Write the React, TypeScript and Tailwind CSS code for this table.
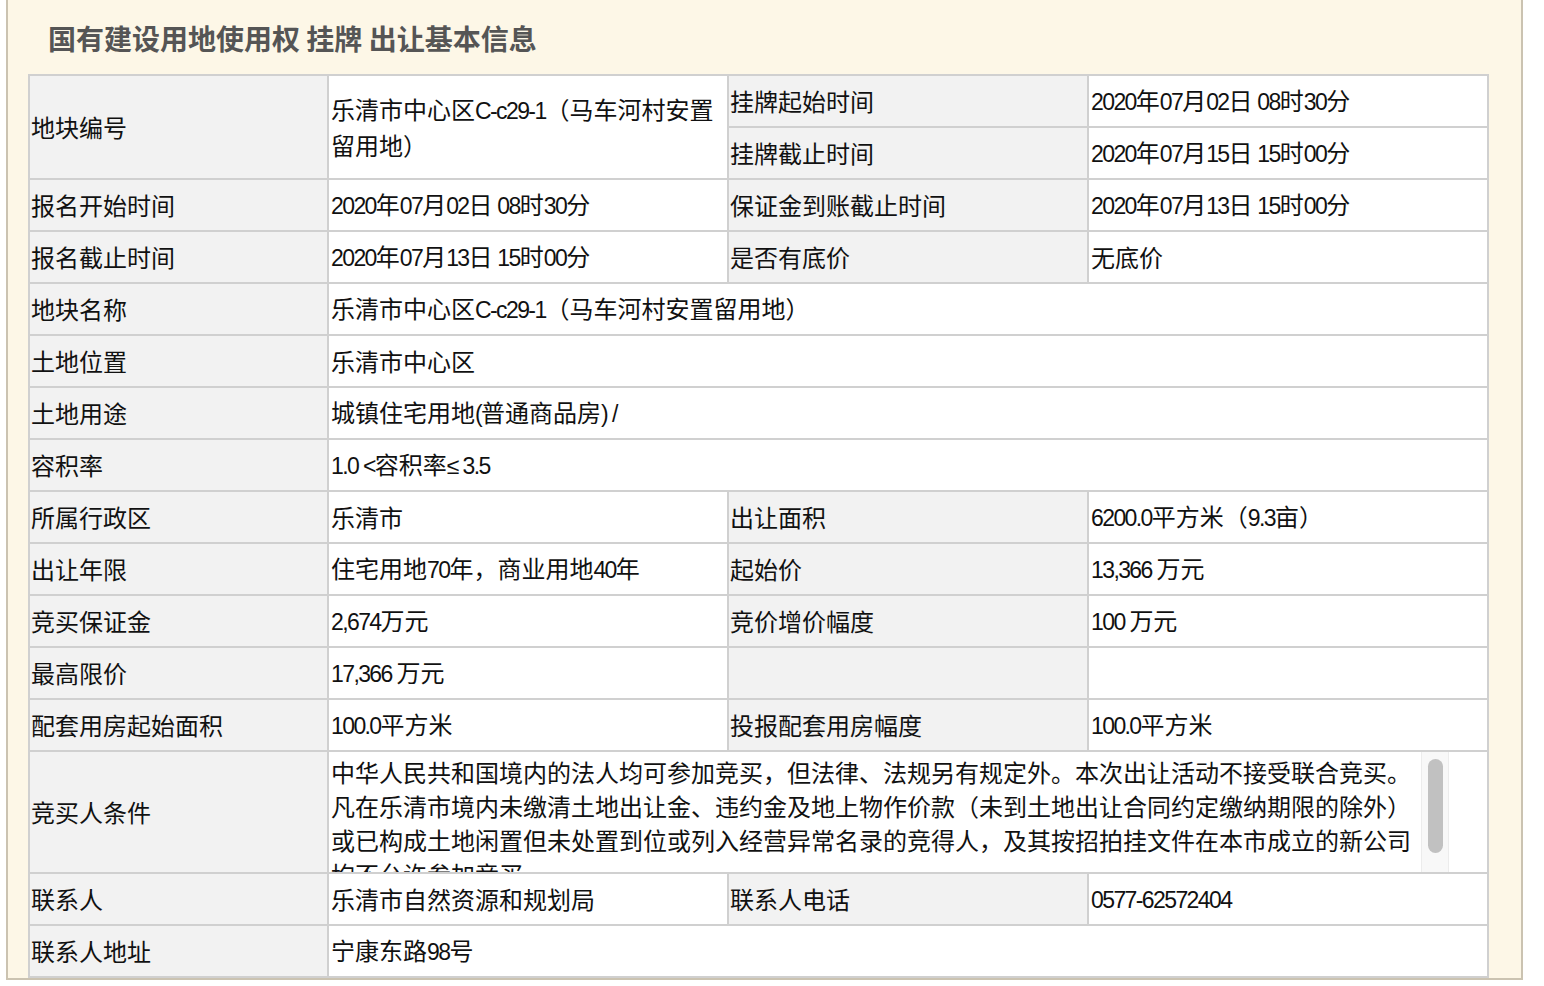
import React from "react";

// latin runs in the value cells are rendered narrow like the source page
function Txt({ s }: { s: string }) {
  const parts = s.split(/([\x20-\x7E≤]+)/);
  return (
    <>
      {parts.map((p, i) =>
        /[0-9A-Za-z()<≤\/]/.test(p) ? (
          <span key={i} className="text-[23px] tracking-[-1.6px] [font-family:'Liberation_Sans',sans-serif]">
            {p}
          </span>
        ) : (
          <React.Fragment key={i}>{p}</React.Fragment>
        )
      )}
    </>
  );
}

function L({ children, rowSpan }: { children?: React.ReactNode; rowSpan?: number }) {
  return (
    <td
      rowSpan={rowSpan}
      className="h-[52px] border-r-2 border-b-2 border-[#d0d0d0] bg-[#f2f2f2] pl-[1px] pr-[2px] align-middle text-[24px] leading-[34px] text-[#111]"
    >
      {children}
    </td>
  );
}

function V({ text, colSpan }: { text?: string; colSpan?: number }) {
  return (
    <td
      colSpan={colSpan}
      className="h-[52px] border-r-2 border-b-2 border-[#d0d0d0] bg-white pl-[2px] pr-[2px] align-middle text-[24px] leading-[34px] text-[#111]"
    >
      {text ? <Txt s={text} /> : null}
    </td>
  );
}

export default function App() {
  return (
    <div className="min-h-screen bg-white [font-family:'Noto_Sans_CJK_SC',sans-serif]">
      <div className="ml-[6px] w-[1517px] border-x-2 border-b-2 border-[#cbc3b1] bg-[#fdf7e7] pl-[20px]">
        <h2 className="pt-[20px] pb-[18px] pl-[20px] text-[28px] font-bold leading-[36px] text-[#555]">
          国有建设用地使用权 挂牌 出让基本信息
        </h2>

        <table className="w-[1459px] table-fixed border-separate border-spacing-0 border-t-2 border-l-2 border-[#d0d0d0]">
          <colgroup>
            <col className="w-[299px]" />
            <col className="w-[400px]" />
            <col className="w-[360px]" />
            <col className="w-[400px]" />
          </colgroup>
          <tbody>
            <tr>
              <L rowSpan={2}>地块编号</L>
              <td
                rowSpan={2}
                className="border-r-2 border-b-2 border-[#d0d0d0] bg-white pl-[2px] pr-0 align-middle text-[24px] leading-[34px] whitespace-nowrap text-[#111]"
              >
                <Txt s="乐清市中心区C-c29-1（马车河村安置" />
                <br />
                留用地）
              </td>
              <L>挂牌起始时间</L>
              <V text="2020年07月02日 08时30分" />
            </tr>
            <tr>
              <L>挂牌截止时间</L>
              <V text="2020年07月15日 15时00分" />
            </tr>
            <tr>
              <L>报名开始时间</L>
              <V text="2020年07月02日 08时30分" />
              <L>保证金到账截止时间</L>
              <V text="2020年07月13日 15时00分" />
            </tr>
            <tr>
              <L>报名截止时间</L>
              <V text="2020年07月13日 15时00分" />
              <L>是否有底价</L>
              <V text="无底价" />
            </tr>
            <tr>
              <L>地块名称</L>
              <V colSpan={3} text="乐清市中心区C-c29-1（马车河村安置留用地）" />
            </tr>
            <tr>
              <L>土地位置</L>
              <V colSpan={3} text="乐清市中心区" />
            </tr>
            <tr>
              <L>土地用途</L>
              <V colSpan={3} text="城镇住宅用地(普通商品房) /" />
            </tr>
            <tr>
              <L>容积率</L>
              <V colSpan={3} text="1.0 <容积率≤ 3.5" />
            </tr>
            <tr>
              <L>所属行政区</L>
              <V text="乐清市" />
              <L>出让面积</L>
              <V text="6200.0平方米（9.3亩）" />
            </tr>
            <tr>
              <L>出让年限</L>
              <V text="住宅用地70年，商业用地40年" />
              <L>起始价</L>
              <V text="13,366 万元" />
            </tr>
            <tr>
              <L>竞买保证金</L>
              <V text="2,674万元" />
              <L>竞价增价幅度</L>
              <V text="100 万元" />
            </tr>
            <tr>
              <L>最高限价</L>
              <V text="17,366 万元" />
              <L></L>
              <V />
            </tr>
            <tr>
              <L>配套用房起始面积</L>
              <V text="100.0平方米" />
              <L>投报配套用房幅度</L>
              <V text="100.0平方米" />
            </tr>
            <tr>
              <L>竞买人条件</L>
              <td colSpan={3} className="h-[122px] border-r-2 border-b-2 border-[#d0d0d0] bg-white p-0 align-top">
                <div className="relative h-[120px] w-[1120px] overflow-hidden pl-[2px] pt-[3px]">
                  <p className="whitespace-nowrap text-[24px] leading-[34px] text-[#111]">
                    中华人民共和国境内的法人均可参加竞买，但法律、法规另有规定外。本次出让活动不接受联合竞买。
                    <br />
                    凡在乐清市境内未缴清土地出让金、违约金及地上物作价款（未到土地出让合同约定缴纳期限的除外）
                    <br />
                    或已构成土地闲置但未处置到位或列入经营异常名录的竞得人，及其按招拍挂文件在本市成立的新公司
                    <br />
                    均不允许参加竞买。
                  </p>
                  <div className="absolute top-0 right-0 bottom-0 w-[28px] border-x border-[#ececec] bg-[#f8f8f8]">
                    <div className="absolute top-[7px] left-[6px] h-[94px] w-[15px] rounded-full bg-[#c1c1c1]" />
                  </div>
                </div>
              </td>
            </tr>
            <tr>
              <L>联系人</L>
              <V text="乐清市自然资源和规划局" />
              <L>联系人电话</L>
              <V text="0577-62572404" />
            </tr>
            <tr>
              <L>联系人地址</L>
              <V colSpan={3} text="宁康东路98号" />
            </tr>
          </tbody>
        </table>
      </div>
    </div>
  );
}
